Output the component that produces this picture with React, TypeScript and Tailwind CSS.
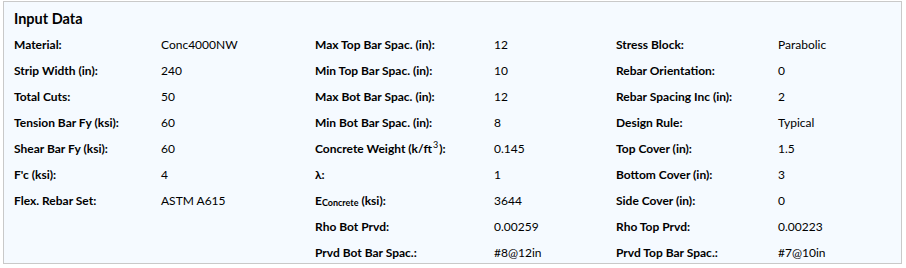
import React from "react";

type Cell = React.ReactNode;

const col1: [Cell, Cell][] = [
  ["Material:", "Conc4000NW"],
  ["Strip Width (in):", "240"],
  ["Total Cuts:", "50"],
  ["Tension Bar Fy (ksi):", "60"],
  ["Shear Bar Fy (ksi):", "60"],
  ["F'c (ksi):", "4"],
  ["Flex. Rebar Set:", "ASTM A615"],
];

const col2: [Cell, Cell][] = [
  ["Max Top Bar Spac. (in):", "12"],
  ["Min Top Bar Spac. (in):", "10"],
  ["Max Bot Bar Spac. (in):", "12"],
  ["Min Bot Bar Spac. (in):", "8"],
  [
    <span>
      Concrete Weight (k/ft
      <sup className="relative -top-[5px] ml-[1px] mr-[1px] text-[9px] font-normal">3</sup>):
    </span>,
    "0.145",
  ],
  ["λ:", "1"],
  [
    <span>
      E<sub className="relative top-[1px] align-baseline text-[9px]">Concrete</sub> (ksi):
    </span>,
    "3644",
  ],
  ["Rho Bot Prvd:", "0.00259"],
  ["Prvd Bot Bar Spac.:", "#8@12in"],
];

const col3: [Cell, Cell][] = [
  ["Stress Block:", "Parabolic"],
  ["Rebar Orientation:", "0"],
  ["Rebar Spacing Inc (in):", "2"],
  ["Design Rule:", "Typical"],
  ["Top Cover (in):", "1.5"],
  ["Bottom Cover (in):", "3"],
  ["Side Cover (in):", "0"],
  ["Rho Top Prvd:", "0.00223"],
  ["Prvd Top Bar Spac.:", "#7@10in"],
];

function Group({ rows, labelW, valueW }: { rows: [Cell, Cell][]; labelW: string; valueW: string }) {
  return (
    <div className={`flex flex-col ${valueW}`}>
      {rows.map(([l, v], i) => (
        <div key={i} className="flex h-[26px] items-center">
          <div className={`${labelW} shrink-0 font-bold`}>{l}</div>
          <div>{v}</div>
        </div>
      ))}
    </div>
  );
}

export default function App() {
  return (
    <div className="h-[268px] w-[906px] bg-white pl-[3px] pt-[1px]" style={{ fontFamily: "Lato, 'Noto Sans', sans-serif" }}>
      <div className="h-[263px] w-[899px] border border-[#c9c9c9] bg-[#f5faff] pl-[10px] text-[12px] text-[#000]">
        <div className="pt-[7px] text-[14.5px] font-bold leading-[19px]">Input Data</div>
        <div className="mt-[4px] flex">
          <Group rows={col1} labelW="w-[147px]" valueW="w-[301px]" />
          <Group rows={col2} labelW="w-[179px]" valueW="w-[301px]" />
          <Group rows={col3} labelW="w-[162px]" valueW="flex-1" />
        </div>
      </div>
    </div>
  );
}
